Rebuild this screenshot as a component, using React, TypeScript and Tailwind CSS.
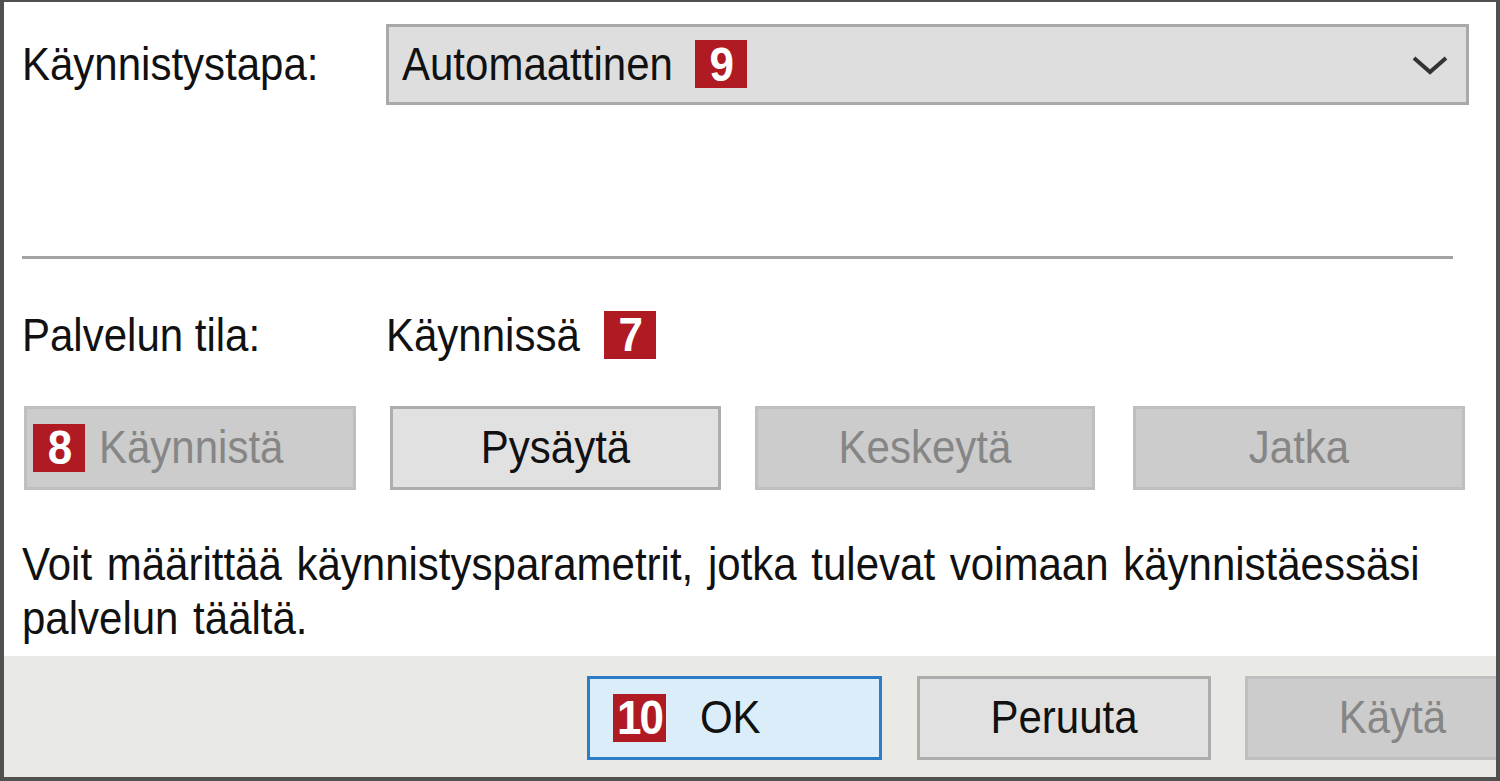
import React from "react";

function T({ children, className }: { children: React.ReactNode; className?: string }) {
  return <span className={`inline-block scale-y-[1.1] ${className ?? ""}`}>{children}</span>;
}

function Badge({ n }: { n: string }) {
  return (
    <span className="inline-flex h-[48px] min-w-[52px] items-center justify-center bg-[#b01a22] px-[4px] text-[44px] font-bold leading-none tracking-[-2px] text-white">
      <T>{n}</T>
    </span>
  );
}

function Btn({
  children,
  variant,
  className,
}: {
  children: React.ReactNode;
  variant: "normal" | "disabled" | "default";
  className?: string;
}) {
  const base =
    "flex h-[84px] shrink-0 items-center justify-center border-[3px] text-[42px] leading-none";
  const v =
    variant === "normal"
      ? "bg-[#e1e1e1] border-[#adadad] text-[#111]"
      : variant === "disabled"
      ? "bg-[#cccccc] border-[#bfbfbf] text-[#868686]"
      : "bg-[#dbedf8] border-[#2c7cc6] text-[#111]";
  return <div className={`${base} ${v} ${className ?? ""}`}>{children}</div>;
}

export default function App() {
  return (
    <div className="flex h-[781px] w-[1500px] flex-col overflow-hidden border-b-4 border-l-4 border-r-4 border-t-2 border-[#505050] bg-white font-['Liberation_Sans',Arial,sans-serif] text-[42px] text-[#111]">
      <div className="flex flex-1 flex-col pl-[18px] pr-[27px]">
        <div className="mt-[22px] flex h-[81px] items-center">
          <div className="w-[364px]">
            <T>Käynnistystapa:</T>
          </div>
          <div className="flex h-full flex-1 items-center border-[3px] border-[#a9a9a9] bg-[#dedede] pl-[13px] pr-[16px]">
            <T>Automaattinen</T>
            <span className="ml-[22px]">
              <Badge n="9" />
            </span>
            <svg className="ml-auto" width="40" height="24" viewBox="0 0 40 24">
              <polyline
                points="4,5 20,19 36,5"
                fill="none"
                stroke="#333"
                strokeWidth="4"
              />
            </svg>
          </div>
        </div>

        <div className="mr-[16px] mt-[151px] h-[3px] bg-[#a3a3a3]" />

        <div className="mt-[51px] flex h-[50px] items-center">
          <div className="w-[364px]">
            <T>Palvelun tila:</T>
          </div>
          <T>Käynnissä</T>
          <span className="ml-[24px]">
            <Badge n="7" />
          </span>
        </div>

        <div className="mt-[46px] flex">
          <Btn variant="disabled" className="ml-[2px] w-[332px] justify-start pl-[6px]">
            <Badge n="8" />
            <T className="ml-[14px]">Käynnistä</T>
          </Btn>
          <Btn variant="normal" className="ml-[34px] w-[331px]">
            <T>Pysäytä</T>
          </Btn>
          <Btn variant="disabled" className="ml-[34px] w-[340px]">
            <T>Keskeytä</T>
          </Btn>
          <Btn variant="disabled" className="ml-[38px] w-[332px]">
            <T>Jatka</T>
          </Btn>
        </div>

        <p className="mt-[48px] leading-[54px] [word-spacing:3px]">
          <T>Voit määrittää käynnistysparametrit, jotka tulevat voimaan käynnistäessäsi</T>
          <br />
          <T>palvelun täältä.</T>
        </p>
      </div>

      <div className="flex h-[121px] shrink-0 items-start bg-[#e9e9e6] pt-[20px]">
        <div className="ml-[583px] flex">
          <Btn variant="default" className="w-[295px] justify-start pl-[23px]">
            <Badge n="10" />
            <T className="ml-[34px]">OK</T>
          </Btn>
          <Btn variant="normal" className="ml-[35px] w-[294px]">
            <T>Peruuta</T>
          </Btn>
          <Btn variant="disabled" className="ml-[34px] w-[295px]">
            <T>Käytä</T>
          </Btn>
        </div>
      </div>
    </div>
  );
}
